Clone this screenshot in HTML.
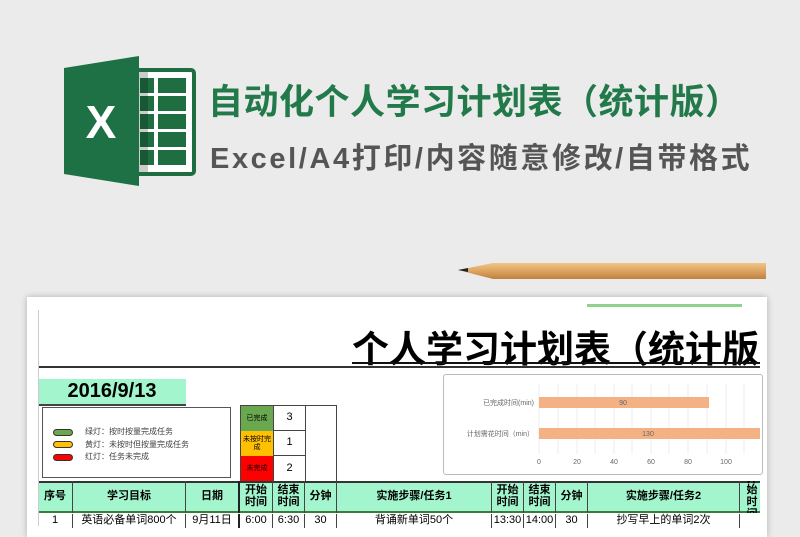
<!DOCTYPE html>
<html><head><meta charset="utf-8"><style>
*{margin:0;padding:0;box-sizing:border-box}
body{width:800px;height:526px;overflow:hidden;background:#ebebeb;position:relative;font-family:"Liberation Sans","Noto Sans CJK SC",sans-serif}
.a{position:absolute}
.c{position:absolute;display:flex;align-items:center;justify-content:center;text-align:center;line-height:1.05}
</style></head><body>
<svg class="a" style="left:64px;top:56px" width="132" height="130" viewBox="0 0 132 130">
<rect x="70" y="14" width="60" height="104" rx="3" fill="#fff" stroke="#1e6e42" stroke-width="4"/>
<g fill="#1e6e42">
<rect x="76" y="22" width="14" height="15"/><rect x="94" y="22" width="28" height="15"/>
<rect x="76" y="40" width="14" height="15"/><rect x="94" y="40" width="28" height="15"/>
<rect x="76" y="58" width="14" height="15"/><rect x="94" y="58" width="28" height="15"/>
<rect x="76" y="76" width="14" height="15"/><rect x="94" y="76" width="28" height="15"/>
<rect x="76" y="94" width="14" height="15"/><rect x="94" y="94" width="28" height="15"/>
</g>
<rect x="70" y="16" width="14" height="100" fill="#000" opacity=".2"/>
<polygon points="0,12 75,0 75,130 0,118" fill="#1e7145"/>
<text x="37" y="82" font-family="Liberation Sans" font-weight="bold" font-size="46" fill="#fff" text-anchor="middle">X</text>
</svg>
<div class="a" style="left:208px;top:74px;font-size:35px;font-weight:bold;color:#22794a;letter-spacing:0.5px;white-space:nowrap">自动化个人学习计划表（统计版）</div>
<div class="a" style="left:210px;top:135px;font-size:29px;font-weight:bold;color:#555;letter-spacing:2.6px;white-space:nowrap">Excel/A4打印/内容随意修改/自带格式</div>
<svg class="a" style="left:455px;top:259px" width="315" height="26">
<defs><linearGradient id="g" x1="0" y1="0" x2="0" y2="1"><stop offset="0" stop-color="#f0c585"/><stop offset=".5" stop-color="#dca461"/><stop offset="1" stop-color="#c08040"/></linearGradient></defs>
<polygon points="3,11 38,4 311,4 311,20 38,20" fill="url(#g)"/>
<polygon points="3,11 13,9 13,13" fill="#222"/>
</svg>
<div class="a" style="left:27px;top:297px;width:740px;height:240px;background:#fff;box-shadow:0 0 6px rgba(0,0,0,.25)"></div>
<div class="a" style="left:587px;top:304px;width:155px;height:3px;background:#8ed28e"></div>
<div class="a" style="left:352px;top:319px;font-size:37px;font-weight:bold;color:#000;white-space:nowrap;width:408px;overflow:hidden">个人学习计划表（统计版</div>
<div class="a" style="left:38px;top:366px;width:722px;height:2px;background:#333"></div>
<div class="a" style="left:352px;top:362px;width:408px;height:2px;background:#111"></div>
<div class="c" style="left:38px;top:379px;width:148px;height:27px;background:#a2f5cd;border-bottom:2px solid #444;font-size:20px;font-weight:bold">2016/9/13</div>
<div class="a" style="left:42px;top:407px;width:189px;height:71px;border:1px solid #555"></div>
<div class="a" style="left:53px;top:429px;width:20px;height:7px;border-radius:4px;background:#6aa84f;border:1px solid #333"></div>
<div class="a" style="left:53px;top:441px;width:20px;height:7px;border-radius:4px;background:#ffc000;border:1px solid #333"></div>
<div class="a" style="left:53px;top:454px;width:20px;height:7px;border-radius:4px;background:#f00;border:1px solid #333"></div>
<div class="a" style="left:85px;top:426px;font-size:8px;line-height:12.5px;color:#444">绿灯：按时按量完成任务<br>黄灯：未按时但按量完成任务<br>红灯：任务未完成</div>
<div class="a" style="left:240px;top:405px;width:97px;height:78px;border:1px solid #444"></div>
<div class="a" style="left:305px;top:405px;width:1px;height:78px;background:#444"></div>
<div class="c" style="left:241px;top:406px;width:32px;height:25px;background:#6aa84f;font-size:7px">已完成</div>
<div class="c" style="left:241px;top:431px;width:32px;height:25px;background:#ffc000;font-size:7px">未按时完成</div>
<div class="c" style="left:241px;top:456px;width:32px;height:26px;background:#f00;font-size:7px">未完成</div>
<div class="c" style="left:273px;top:406px;width:32px;height:25px;font-size:11px;border-bottom:1px solid #444;border-left:1px solid #444">3</div>
<div class="c" style="left:273px;top:431px;width:32px;height:25px;font-size:11px;border-bottom:1px solid #444;border-left:1px solid #444">1</div>
<div class="c" style="left:273px;top:456px;width:32px;height:26px;font-size:11px;border-left:1px solid #444">2</div>
<div class="a" style="left:443px;top:374px;width:320px;height:101px;border:1px solid #bbb;border-radius:3px;background:#fff"></div>
<svg class="a" style="left:443px;top:374px" width="317" height="100">
<g stroke="#eee"><line x1="96" y1="10" x2="96" y2="80"/><line x1="115" y1="10" x2="115" y2="80"/><line x1="134" y1="10" x2="134" y2="80"/><line x1="152" y1="10" x2="152" y2="80"/><line x1="171" y1="10" x2="171" y2="80"/><line x1="189" y1="10" x2="189" y2="80"/><line x1="208" y1="10" x2="208" y2="80"/><line x1="226" y1="10" x2="226" y2="80"/><line x1="245" y1="10" x2="245" y2="80"/><line x1="264" y1="10" x2="264" y2="80"/><line x1="283" y1="10" x2="283" y2="80"/><line x1="301" y1="10" x2="301" y2="80"/></g>
<rect x="96" y="23" width="170" height="11" fill="#f4b183"/>
<rect x="96" y="54" width="221" height="11" fill="#f4b183"/>
<g font-size="7" fill="#666" font-family="Liberation Sans,Noto Sans CJK SC,sans-serif">
<text x="180" y="31" text-anchor="middle">90</text><text x="205" y="62" text-anchor="middle">130</text>
<text x="91" y="31" text-anchor="end">已完成时间(min)</text><text x="91" y="62" text-anchor="end">计划需花时间（min）</text>
<text x="96" y="90" text-anchor="middle">0</text><text x="134" y="90" text-anchor="middle">20</text><text x="171" y="90" text-anchor="middle">40</text><text x="208" y="90" text-anchor="middle">60</text><text x="245" y="90" text-anchor="middle">80</text><text x="283" y="90" text-anchor="middle">100</text>
</g></svg>
<div class="a" style="left:38px;top:481px;width:722px;height:32px;background:#a2f5cd;border-top:2px solid #333;border-bottom:2px solid #3d7a3d"></div>
<div class="a" style="left:38px;top:481px;width:722px;height:50px;font-size:11px;font-weight:bold">
<div class="c" style="left:0;top:0;width:35px;height:32px;border-right:1px solid #444">序号</div>
<div class="c" style="left:35px;top:0;width:113px;height:32px;border-right:1px solid #444">学习目标</div>
<div class="c" style="left:148px;top:0;width:54px;height:32px;border-right:2px solid #222">日期</div>
<div class="c" style="left:202px;top:0;width:33px;height:32px;border-right:1px solid #444">开始<br>时间</div>
<div class="c" style="left:235px;top:0;width:32px;height:32px;border-right:1px solid #444">结束<br>时间</div>
<div class="c" style="left:267px;top:0;width:32px;height:32px;border-right:1px solid #444">分钟</div>
<div class="c" style="left:299px;top:0;width:155px;height:32px;border-right:1px solid #444">实施步骤/任务1</div>
<div class="c" style="left:454px;top:0;width:32px;height:32px;border-right:1px solid #444">开始<br>时间</div>
<div class="c" style="left:486px;top:0;width:32px;height:32px;border-right:1px solid #444">结束<br>时间</div>
<div class="c" style="left:518px;top:0;width:32px;height:32px;border-right:1px solid #444">分钟</div>
<div class="c" style="left:550px;top:0;width:152px;height:32px;border-right:1px solid #444">实施步骤/任务2</div>
<div class="c" style="left:702px;top:0;width:20px;height:32px;overflow:hidden;justify-content:flex-start;padding-left:4px">开始<br>时间</div>
<div style="font-weight:normal;font-size:11px">
<div class="c" style="left:0;top:33px;width:35px;height:14px;border-right:1px solid #444">1</div>
<div class="c" style="left:35px;top:33px;width:113px;height:14px;border-right:1px solid #444">英语必备单词800个</div>
<div class="c" style="left:148px;top:33px;width:54px;height:14px;border-right:2px solid #222">9月11日</div>
<div class="c" style="left:202px;top:33px;width:33px;height:14px;border-right:1px solid #444">6:00</div>
<div class="c" style="left:235px;top:33px;width:32px;height:14px;border-right:1px solid #444">6:30</div>
<div class="c" style="left:267px;top:33px;width:32px;height:14px;border-right:1px solid #444">30</div>
<div class="c" style="left:299px;top:33px;width:155px;height:14px;border-right:1px solid #444">背诵新单词50个</div>
<div class="c" style="left:454px;top:33px;width:32px;height:14px;border-right:1px solid #444">13:30</div>
<div class="c" style="left:486px;top:33px;width:32px;height:14px;border-right:1px solid #444">14:00</div>
<div class="c" style="left:518px;top:33px;width:32px;height:14px;border-right:1px solid #444">30</div>
<div class="c" style="left:550px;top:33px;width:152px;height:14px;border-right:1px solid #444">抄写早上的单词2次</div>
</div></div>
<div class="a" style="left:38px;top:310px;width:1px;height:216px;background:#ccc"></div>
</body></html>
